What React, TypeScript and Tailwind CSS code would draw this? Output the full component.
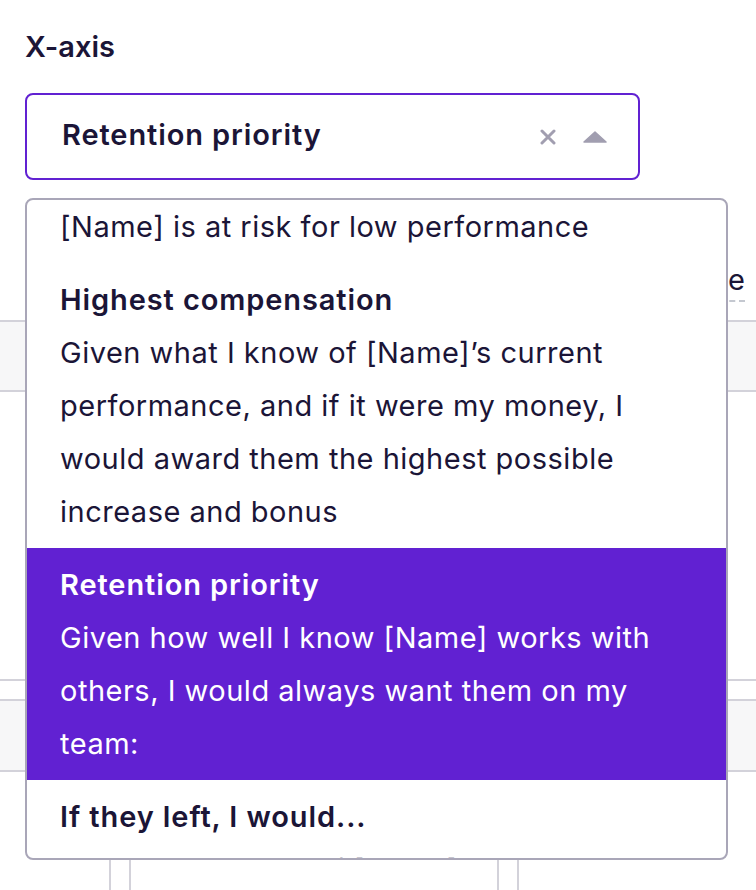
import React from "react";

const items = [
  {
    title: "Low performance risk",
    lines: ["[Name] is at risk for low performance"],
    active: false,
  },
  {
    title: "Highest compensation",
    lines: [
      "Given what I know of [Name]\u2019s current",
      "performance, and if it were my money, I",
      "would award them the highest possible",
      "increase and bonus",
    ],
    active: false,
  },
  {
    title: "Retention priority",
    lines: [
      "Given how well I know [Name] works with",
      "others, I would always want them on my",
      "team:",
    ],
    active: true,
  },
  {
    title: "If they left, I would...",
    lines: ["Consider the loss of [Name] a setback"],
    active: false,
  },
];

export default function App() {
  return (
    <div
      className="relative w-[756px] h-[890px] overflow-hidden bg-white text-[#1b1537]"
      style={{ fontFamily: "Inter, 'Noto Sans', sans-serif" }}
    >
      {/* Label */}
      <div className="pl-[25px] pt-[29px] text-[29px] leading-[36px] font-semibold">X-axis</div>

      {/* Select */}
      <div className="ml-[25px] mt-[28px] flex h-[87px] w-[615px] items-center rounded-[8px] border-2 border-[#6121d2] pl-[35px] pr-[31px]">
        <span className="flex-1 pb-[4px] text-[29px] font-semibold tracking-[0.9px] leading-[36px]">Retention priority</span>
        <svg width="16" height="16" viewBox="0 0 16 16" className="mr-[27px]">
          <path d="M2 2 L14 14 M14 2 L2 14" stroke="#a19eb0" strokeWidth="3" strokeLinecap="round" />
        </svg>
        <svg width="24" height="12" viewBox="0 0 24 12">
          <path d="M12 1 L23 11 L1 11 Z" fill="#a19eb0" stroke="#a19eb0" strokeWidth="1.5" strokeLinejoin="round" />
        </svg>
      </div>

      {/* Background content under dropdown */}
      <div className="mt-[86px] flex justify-end pr-[11px]">
        <span className="border-b-2 border-dashed border-[#c4c8d0] pb-[6px] text-[29px] leading-[28px]">Average</span>
      </div>
      <div className="mt-[18px] h-[72px] border-y-2 border-[#d3d2da] bg-[#f7f7f8]" />
      <div className="h-[287px]" />
      <div className="h-[2px] bg-[#d3d2da]" />
      <div className="mt-[18px] h-[73px] border-y-2 border-[#d3d2da] bg-[#f7f7f8]" />
      <div className="flex h-[120px]">
        <div className="ml-[109px] w-[22px] border-x-2 border-[#d3d2da]" />
        <div className="ml-[366px] w-[22px] border-x-2 border-[#d3d2da]" />
      </div>

      {/* Dropdown */}
      <div className="absolute left-[25px] top-[198px] h-[662px] w-[703px] overflow-hidden rounded-[8px] border-2 border-[#a9a6b8] bg-white">
        <div className="-mt-[63px]">
          {items.map((it) => (
            <div
              key={it.title}
              className={
                "px-[33px] py-[10px] text-[29px] leading-[53px] tracking-[0.5px] " +
                (it.active ? "bg-[#6121d2] text-white" : "text-[#1b1537]")
              }
            >
              <div className="font-semibold tracking-[0.9px]">{it.title}</div>
              {it.lines.map((l) => (
                <div key={l}>{l}</div>
              ))}
            </div>
          ))}
        </div>
      </div>
    </div>
  );
}
